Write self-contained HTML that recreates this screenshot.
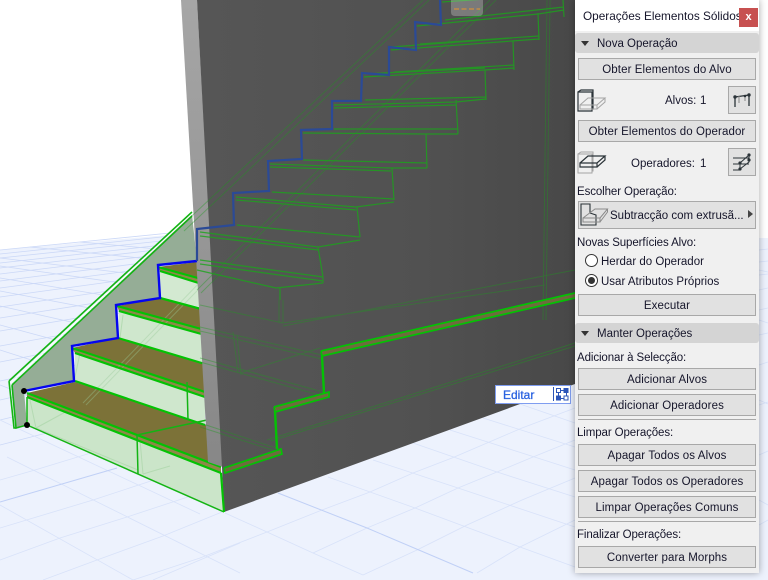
<!DOCTYPE html>
<html><head><meta charset="utf-8">
<style>
html,body{margin:0;padding:0;background:#fff}
#r{position:relative;width:768px;height:580px;overflow:hidden;font-family:"Liberation Sans",sans-serif;font-size:11.5px;color:#15152a}
#s{position:absolute;left:0;top:0}
#p{position:absolute;left:575px;top:0;width:184px;height:573px;background:#f0f0f0;box-shadow:0 0 7px rgba(0,0,0,.35)}
#tb{position:absolute;left:0;top:0;width:184px;height:31px;background:#fff}
.a{position:absolute;white-space:nowrap}
.b{position:absolute;left:3px;width:176px;height:20px;border:1px solid #a8a8a8;background:#e1e1e1;text-align:center;line-height:22px;letter-spacing:.1px}
.h{position:absolute;left:0;width:184px;height:20px;background:#d4d4d4;border-radius:3px;line-height:22px}
.h span{position:absolute;left:22px}
.h i{position:absolute;left:6px;top:8px;width:0;height:0;border-left:4px solid transparent;border-right:4px solid transparent;border-top:5px solid #333}
.l{position:absolute;left:2px;white-space:nowrap;line-height:14px;letter-spacing:-.1px;margin-top:1px}
.sp{position:absolute;left:3px;width:178px;height:1px;background:#a8a8a8}
.ib{position:absolute;left:153px;width:26px;height:26px;border:1px solid #a8a8a8;background:#e1e1e1}
.ra{position:absolute;left:10px;width:11px;height:11px;border:1px solid #333;border-radius:50%;background:#fff}
</style></head><body>
<div id="r">
<svg id="s" width="768" height="580" viewBox="0 0 768 580">
<defs>
<linearGradient id="wall" x1="0" x2="1" y1="0" y2="0"><stop offset="0" stop-color="#565656"/><stop offset=".6" stop-color="#515151"/><stop offset="1" stop-color="#484848"/></linearGradient>
<linearGradient id="band" x1="0" x2="0" y1="0" y2="1"><stop offset="0" stop-color="#a6a6a6"/><stop offset="1" stop-color="#878787"/></linearGradient>
</defs>
<rect width="768" height="580" fill="#fff"/>
<polygon points="0,250 190,233 768,238 768,580 0,580" fill="#edf2fd"/>
<g stroke="#cbd8f7" stroke-width=".8" fill="none">
<path d="M0 250L190 231M0 254L190 234M0 258L190 238M0 263L190 242M0 268L190 246M0 274L190 251M0 281L190 257M0 288L190 263M0 297L190 271M0 307L190 279M0 318L190 288M0 331L190 299M0 346L190 312M0 362L190 325M0 381L190 341M0 400L190 357M0 420L190 374M0 445L190 396"/>
<path d="M0 258L200 282M0 266L200 294M0 278L200 311M0 291L200 329M0 306L200 351M0 325L200 379M0 350L200 414M0 385L200 463M30 247L180 262M80 242L190 252"/>
</g>
<g stroke="#d8e2f9" stroke-width=".8" fill="none">
<path d="M0 420L200 514M7 457L240 573M0 505L133 580M0 480L35 470L117 445M0 528L93 500L163 477M0 560L60 538L127 517L200 493M43 580L97 560L163 536L222 512M153 580L207 557L240 543"/>
<path d="M328 477L415 508L520 547L575 567M373 460L458 488L575 527M413 443L497 472L575 497M450 430L522 453L575 470M483 418L575 447M517 403L575 423M225 513L267 532L313 553L363 575"/>
<path d="M133 580L200 558L267 532L322 510L370 492L413 473L452 458L487 443L522 428L575 408M313 553L367 528L415 508L458 488L497 472L533 457L575 440M363 575L417 550L467 525L522 500L575 478M477 573L520 547L575 520"/>
<path d="M759 250L768 249M759 262L768 261M759 275L768 274M759 290L768 288M759 310L768 308M759 335L768 333M759 365L768 362M759 405L768 402M759 455L768 451M759 525L768 520M759 270L768 272M759 320L768 323M759 400L768 404M759 500L768 505"/>
</g>
<g stroke="#c0d0f6" stroke-width="1" fill="none"><path d="M0 502L117 468M278 493L367 528L473 573"/></g>
<polygon points="12,385 192,214 197,262 158,266 160,298 116,305 118,338 72,346 74,381 24,391 27,425 16,428" fill="#95ad96"/>
<polygon points="27,397 221,473 224,512 27,425" fill="#cbe5c9"/>
<polygon points="75,353 205,395 205,425 75,382" fill="#cfe7cd"/>
<polygon points="119,311 205,333 205,363 118,338" fill="#cfe7cd"/>
<polygon points="160,271 205,283 205,308 160,298" fill="#d3e9d1"/>
<g stroke="#b4dab2" stroke-width="1" fill="none">
<path d="M30 400L36 428L138 470M36 428L82 403M143 474L140 440M143 474L170 466M80 353L74 382M123 315L120 338"/>
</g>
<polygon points="27,393 75,382 215,428 221,467" fill="#7c7238"/>
<polygon points="72,348 118,338 205,364 205,392" fill="#7c7238"/>
<polygon points="117,306 160,298 205,310 205,330" fill="#7c7238"/>
<polygon points="158,267 197,262 205,264 205,280" fill="#7c7238"/>
<polygon points="27,393 221,467 221,473 27,397" fill="#8f8748"/>
<polygon points="72,348 205,392 205,397 75,353" fill="#8f8748"/>
<polygon points="117,306 205,330 205,335 119,311" fill="#8f8748"/>
<polygon points="158,267 205,280 205,285 160,271" fill="#8f8748"/>
<path d="M83 403L263 217M86 405L266 220" stroke="#9ccb9a" stroke-width="1" fill="none" opacity=".4"/>
<g stroke="#04c204" stroke-width="2.2" fill="none">
<path d="M27 393L221 467M27 397L221 473"/>
<path d="M75 381L205 425M72 348L205 392M75 353L205 397"/>
<path d="M118 338L205 364M117 306L205 330M119 311L205 335"/>
<path d="M160 298L205 310M158 267L205 280M160 271L205 285"/>
</g>
<g stroke="#14b414" stroke-width="1.5" fill="none">
<path d="M27 425L224 512M137 435L138 474M187 382L188 420M137 435L207 420M27 397L27 425"/>
</g>
<g stroke="#14b414" stroke-width="1.6" fill="none">
<path d="M9 381L192 212M12 385L192 216M9 381L14 428L17 428M12 385L16 428L27 425"/>
</g>
<path d="M10.5 383L192 214" stroke="#fff" stroke-width="1" fill="none"/>
<polygon points="181,0 197,0 223,467 208,462" fill="url(#band)"/>
<polygon points="197,0 575,0 575,384 224,512 222,467" fill="url(#wall)"/>
<path d="M221 473L224 512" stroke="#04c204" stroke-width="2.2"/>
<path d="M24 391L74 381L72 346L118 338L116 305L160 298L158 265L197 261" fill="none" stroke="#0505f0" stroke-width="2.4"/>
<g fill="none" stroke="#1ba51b" stroke-width="1.2" opacity=".8">
<path d="M200 232L318 247L360 240M237 225L360 237M357 207L360 237M200 236L318 250M318 247L323 277"/>
<path d="M200 260L323 277M197 270L276 288L323 283M323 277L323 283M280 288L280 300M200 264L323 281"/>
<path d="M236 197L356 207L394 202M272 192L394 199M236 200L356 210M392 168L394 200"/>
<path d="M270 164L391 168L427 168M303 160L427 163M426 134L427 168M270 167L391 171"/>
<path d="M303 133L424 134L458 134M334 129L458 129M456 100L458 134"/>
<path d="M334 105L456 102L486 99M365 100L486 97M485 70L486 100M334 108L456 105"/>
<path d="M364 77L485 70L514 68M394 72L514 65M513 41L514 70M364 74L485 68"/>
<path d="M391 50L512 41L539 39M420 44L539 36M538 13L539 40M391 47L512 38"/>
<path d="M417 26L538 14L564 10M445 20L564 7M563 0L564 17M442 2L560 -6"/>
</g>
<g fill="none" stroke="#1f9a1f" stroke-width="1" opacity=".4">
<path d="M180 227L423 0M184 231L429 0M197 290L490 0M201 293L496 0M547 0L543 320M550 0L546 320"/>
<path d="M283 323L545 285M283 326L575 270M267 440L575 343M271 441L575 346M283 300L283 323M279 300L279 323M200 305L283 323M200 327L322 355M200 331L322 359M200 358L323 392M200 362L323 396M200 423L282 450M200 427L282 453M233 332L238 373M240 373L320 348M237 335L241 375"/>
</g>
<polygon points="224,468 281,449 282,454 225,473" fill="#6f6a3f"/>
<polygon points="274,407 329,392 329,397 275,412" fill="#6f6a3f"/>
<polygon points="321,351 575,293 575,298 322,356" fill="#6f6a3f"/>
<g fill="none" stroke="#04c204" stroke-width="1.7">
<path d="M224 468L281 449L282 454L225 473L224 468M274 407L329 392L329 397L275 412L274 407M321 351L575 293M322 356L575 298M321 351L322 356"/>
</g>
<g fill="none" stroke="#04c204" stroke-width="2.4"><path d="M275 411L277 449M322 356L324 393"/></g>
<path d="M197 261L197 229L234 225L233 193L269 191L268 161L302 159L301 130L332 129L332 101L361 101L362 73L389 75L389 47L416 50L415 22L441 25L440 0" fill="none" stroke="#2b4a96" stroke-width="2.2"/>
<circle cx="24" cy="391" r="3" fill="#000"/><circle cx="27" cy="425" r="3" fill="#000"/>
<path d="M451 0H483V12Q483 16 479 16H455Q451 16 451 12Z" fill="#fff" opacity=".25"/>
<path d="M454 9H480" stroke="#e8962e" stroke-width="1" stroke-dasharray="5 2.5"/>
</svg>

<div class="a" style="left:495px;top:385px;width:74px;height:17px;background:#fff;border:1px solid #7f9df0;line-height:18px;color:#2a62e0;font-size:12px"><span style="position:absolute;left:7px;top:0;-webkit-text-stroke:.3px #2a62e0">Editar</span><span style="position:absolute;left:57px;top:1px;width:1px;height:14px;background:#2c55b8"></span>
<svg style="position:absolute;left:60px;top:2px" width="13" height="13" viewBox="0 0 13 13"><rect x=".5" y=".5" width="4" height="4" fill="#fff" stroke="#2c55b8"/><rect x="8" y=".5" width="4" height="4" fill="#2c55b8" stroke="#2c55b8"/><rect x=".5" y="8" width="4" height="4" fill="#2c55b8" stroke="#2c55b8"/><rect x="8" y="8" width="4" height="4" fill="#fff" stroke="#2c55b8"/><path d="M4.5 2.5H8M2.5 4.5V8M10.5 4.5V8M4.5 10.5H8" stroke="#2c55b8"/></svg></div>

<div id="p">
<div id="tb"></div>
<div class="a" style="left:8px;top:9px;line-height:15px;font-size:11.8px">Operações Elementos Sólidos</div>
<div class="a" style="left:164px;top:8px;width:19px;height:19px;background:#c75050;color:#fff;text-align:center;line-height:19px;font-weight:bold;font-size:11px">x</div>

<div class="h" style="top:33px"><i></i><span>Nova Operação</span></div>
<div class="b" style="top:58px">Obter Elementos do Alvo</div>
<svg class="a" style="left:2px;top:88px" width="30" height="26" viewBox="0 0 30 26" fill="none"><path d="M1 4H15V23H1ZM1 4L4 2H16V21H15" stroke="#2b3338" stroke-width="1.2"/><path d="M3 17L11 10H28L20 17H3V21H20V17M28 10V14L20 21" stroke="#a5a5a5"/></svg>
<div class="a" style="left:90px;top:94px;line-height:14px">Alvos:</div><div class="a" style="left:125px;top:94px;line-height:14px">1</div>
<div class="ib" style="top:86px"><svg width="26" height="26" viewBox="0 0 26 26" fill="none"><path d="M6 10L20 8M6 10V20M20 8V19" stroke="#2b3338" stroke-width="1.3"/><path d="M10 9V16M16 9V14" stroke="#888"/><circle cx="6" cy="10" r="1.7" fill="#2b3338"/><circle cx="20" cy="8" r="1.7" fill="#2b3338"/><circle cx="16" cy="9" r="1.3" fill="#2b3338"/></svg></div>

<div class="b" style="top:120px">Obter Elementos do Operador</div>
<svg class="a" style="left:2px;top:150px" width="30" height="26" viewBox="0 0 30 26" fill="none"><path d="M1 4H15V23H1ZM1 4L4 2H16V21H15" stroke="#a5a5a5"/><path d="M3 13L11 6H28L20 13H3V17H20V13M28 6V10L20 17" stroke="#2b3338" stroke-width="1.2"/></svg>
<div class="a" style="left:56px;top:157px;line-height:14px">Operadores:</div><div class="a" style="left:125px;top:157px;line-height:14px">1</div>
<div class="ib" style="top:148px"><svg width="26" height="26" viewBox="0 0 26 26" fill="none"><path d="M4 9H20M4 15H20M4 21H11M11 20L20 13L20 6L11 14V20" stroke="#2b3338" stroke-width="1"/><circle cx="20" cy="6" r="1.6" fill="#2b3338"/><circle cx="20" cy="11" r="1.6" fill="#2b3338"/><circle cx="11" cy="14" r="1.6" fill="#2b3338"/><circle cx="11" cy="20" r="1.6" fill="#2b3338"/></svg></div>

<div class="l" style="top:184px">Escolher Operação:</div>
<div class="a" style="left:3px;top:201px;width:176px;height:26px;border:1px solid #a8a8a8;background:#e1e1e1"></div>
<svg class="a" style="left:5px;top:203px" width="30" height="25" viewBox="0 0 30 25" fill="none"><path d="M1 1H10V10L16 12V22H1Z" stroke="#2b3338" stroke-width="1.1"/><path d="M3 15L15 6H27.5L20 15H3V19H20V15M27.5 6V9L20 19" stroke="#8a8a8a"/></svg>
<div class="a" style="left:35px;top:209px;line-height:14px">Subtracção com extrusã...</div>
<div class="a" style="left:173px;top:210px;width:0;height:0;border-top:4px solid transparent;border-bottom:4px solid transparent;border-left:5px solid #444"></div>

<div class="l" style="top:235px">Novas Superfícies Alvo:</div>
<div class="ra" style="top:254px"></div><div class="a" style="left:26px;top:255px;line-height:14px">Herdar do Operador</div>
<div class="ra" style="top:274px"></div><div class="a" style="left:13px;top:277px;width:7px;height:7px;border-radius:50%;background:#333"></div><div class="a" style="left:26px;top:275px;line-height:14px">Usar Atributos Próprios</div>
<div class="b" style="top:294px">Executar</div>

<div class="h" style="top:323px"><i></i><span>Manter Operações</span></div>
<div class="l" style="top:350px">Adicionar à Selecção:</div>
<div class="b" style="top:368px">Adicionar Alvos</div>
<div class="b" style="top:394px">Adicionar Operadores</div>
<div class="sp" style="top:419px"></div>
<div class="l" style="top:425px">Limpar Operações:</div>
<div class="b" style="top:444px">Apagar Todos os Alvos</div>
<div class="b" style="top:470px">Apagar Todos os Operadores</div>
<div class="b" style="top:496px">Limpar Operações Comuns</div>
<div class="sp" style="top:521px"></div>
<div class="l" style="top:527px">Finalizar Operações:</div>
<div class="b" style="top:546px">Converter para Morphs</div>
</div>
</div>
</body></html>
